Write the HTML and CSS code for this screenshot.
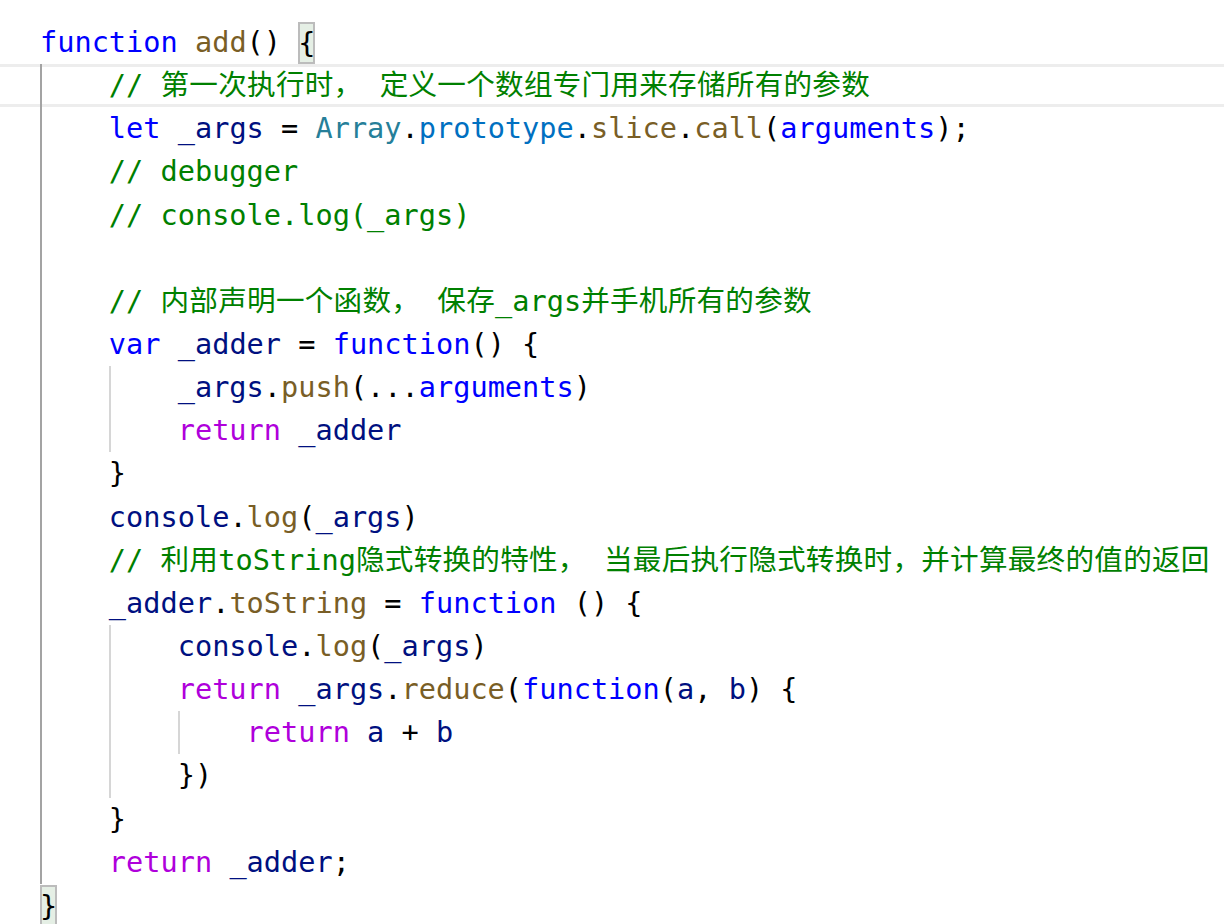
FILE: index.html
```html
<!DOCTYPE html>
<html lang="zh-CN">
<head>
<meta charset="utf-8">
<title>add.js</title>
<link rel="stylesheet" href="styles.css">
</head>
<body>
<div class="editor">
<div class="ln"><span class="k">function</span> <span class="f">add</span>() <span class="bm">{</span></div>
<div class="ln cur"><span class="ind ga">    </span><span class="cm">// <span class="zh">第一次执行时，</span> <span class="zh">定义一个数组专门用来存储所有的参数</span></span></div>
<div class="ln"><span class="ind ga">    </span><span class="k">let</span> <span class="v">_args</span> = <span class="t">Array</span>.<span class="p">prototype</span>.<span class="f">slice</span>.<span class="f">call</span>(<span class="k">arguments</span>);</div>
<div class="ln"><span class="ind ga">    </span><span class="cm">// debugger</span></div>
<div class="ln"><span class="ind ga">    </span><span class="cm">// console.log(_args)</span></div>
<div class="ln"><span class="ind ga">    </span></div>
<div class="ln"><span class="ind ga">    </span><span class="cm">// <span class="zh">内部声明一个函数，</span> <span class="zh">保存</span>_args<span class="zh">并手机所有的参数</span></span></div>
<div class="ln"><span class="ind ga">    </span><span class="k">var</span> <span class="v">_adder</span> = <span class="k">function</span>() {</div>
<div class="ln"><span class="ind ga">    </span><span class="ind g">    </span><span class="v">_args</span>.<span class="f">push</span>(...<span class="k">arguments</span>)</div>
<div class="ln"><span class="ind ga">    </span><span class="ind g">    </span><span class="c">return</span> <span class="v">_adder</span></div>
<div class="ln"><span class="ind ga">    </span>}</div>
<div class="ln"><span class="ind ga">    </span><span class="v">console</span>.<span class="f">log</span>(<span class="v">_args</span>)</div>
<div class="ln"><span class="ind ga">    </span><span class="cm">// <span class="zh">利用</span>toString<span class="zh">隐式转换的特性，</span> <span class="zh">当最后执行隐式转换时，并计算最终的值的返回</span></span></div>
<div class="ln"><span class="ind ga">    </span><span class="v">_adder</span>.<span class="f">toString</span> = <span class="k">function</span> () {</div>
<div class="ln"><span class="ind ga">    </span><span class="ind g">    </span><span class="v">console</span>.<span class="f">log</span>(<span class="v">_args</span>)</div>
<div class="ln"><span class="ind ga">    </span><span class="ind g">    </span><span class="c">return</span> <span class="v">_args</span>.<span class="f">reduce</span>(<span class="k">function</span>(<span class="v">a</span>, <span class="v">b</span>) {</div>
<div class="ln"><span class="ind ga">    </span><span class="ind g">    </span><span class="ind g">    </span><span class="c">return</span> <span class="v">a</span> + <span class="v">b</span></div>
<div class="ln"><span class="ind ga">    </span><span class="ind g">    </span>})</div>
<div class="ln"><span class="ind ga">    </span>}</div>
<div class="ln"><span class="ind ga">    </span><span class="c">return</span> <span class="v">_adder</span>;</div>
<div class="ln"><span class="bm">}</span></div>
</div>
</body>
</html>
```

FILE: styles.css
```css
html, body {
  margin: 0;
  padding: 0;
  background: #ffffff;
  overflow: hidden;
}

.editor {
  padding: 21px 0 0 40px;
  font-family: "DejaVu Sans Mono", "Noto Sans CJK SC", monospace;
  font-size: 28.6px;
  color: #000000;
}

.ln {
  height: 43.15px;
  line-height: 43.15px;
  white-space: pre;
}

.cur {
  margin-left: -40px;
  padding-left: 40px;
  box-shadow: inset 0 3px 0 #ededed, inset 0 -3px 0 #ededed;
}

.ind {
  display: inline-block;
  width: 4ch;
  height: 43.15px;
  vertical-align: top;
}

.ind.ga {
  box-shadow: inset 2px 0 0 #a3a3a3;
}

.ind.g {
  box-shadow: inset 2px 0 0 #d6d6d6;
}

.bm {
  display: inline-block;
  height: 42px;
  margin-top: 1px;
  vertical-align: top;
  background: #e5efe5;
  box-shadow: inset 0 0 0 2px #bcbcbc;
}

.zh {
  letter-spacing: 0.25px;
}

.k { color: #0000ff; }
.c { color: #af00db; }
.f { color: #795e26; }
.v { color: #001080; }
.t { color: #267f99; }
.p { color: #0070c1; }
.cm { color: #008000; }
```
